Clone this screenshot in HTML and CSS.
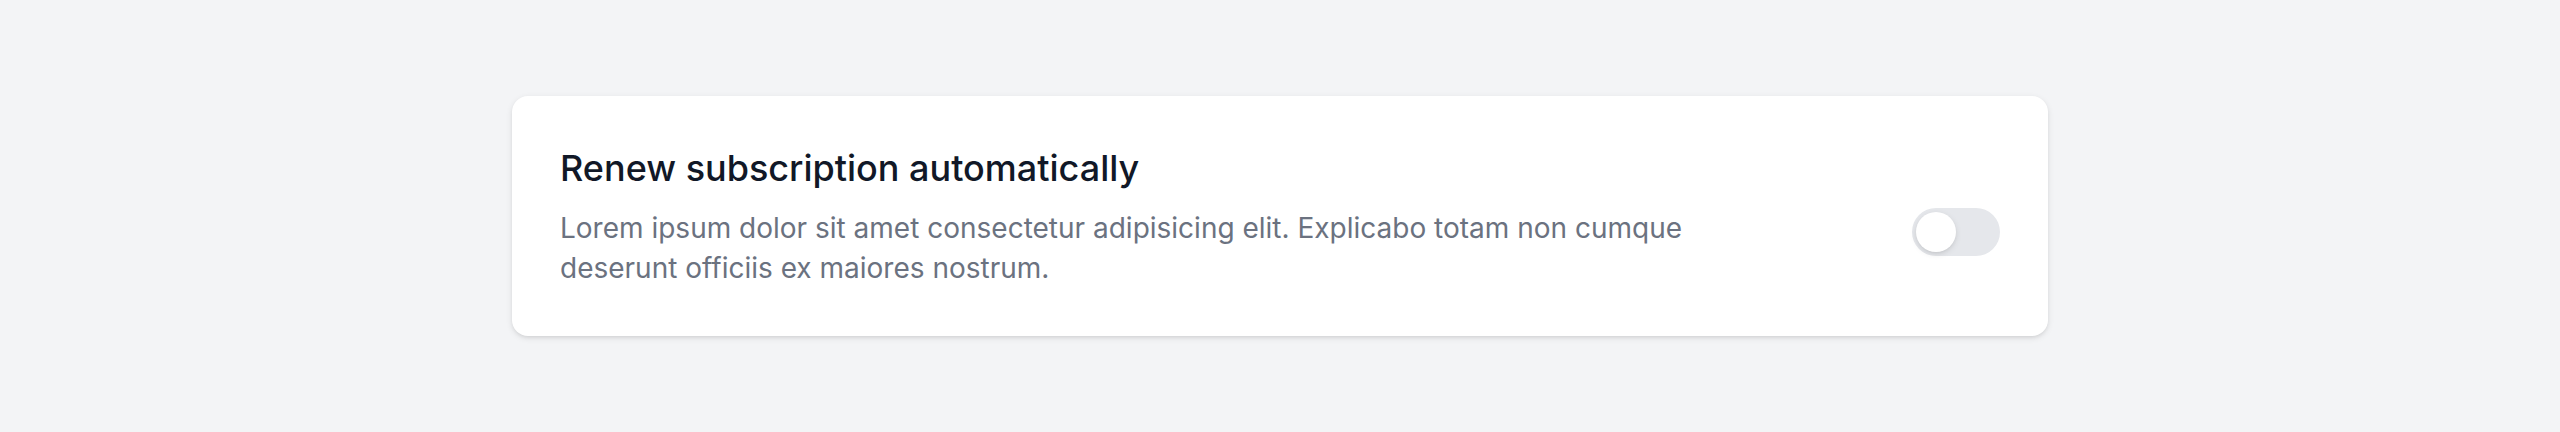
FILE: index.html
```html
<!DOCTYPE html>
<html lang="en">
<head>
<meta charset="utf-8">
<title>Renew subscription</title>
<link rel="stylesheet" href="styles.css">
</head>
<body>
<main class="page">
  <section class="card">
    <h3 class="title" id="renew-label">Renew subscription automatically</h3>
    <div class="row">
      <div class="desc">
        <p>Lorem ipsum dolor sit amet consectetur adipisicing elit. Explicabo totam non cumque deserunt officiis ex maiores nostrum.</p>
      </div>
      <div class="toggle-wrap">
        <button type="button" class="toggle" role="switch" aria-checked="false" aria-labelledby="renew-label">
          <span class="knob"></span>
        </button>
      </div>
    </div>
  </section>
</main>
</body>
</html>
```

FILE: styles.css
```css
* { box-sizing: border-box; }
html, body { margin: 0; padding: 0; }
body {
  background: #f3f4f6;
  font-family: Inter, "Noto Sans", "Liberation Sans", sans-serif;
  -webkit-font-smoothing: antialiased;
}
.page {
  padding: 96px 0;
}
.card {
  max-width: 1536px;
  margin: 0 auto;
  background: #ffffff;
  border-radius: 16px;
  box-shadow: 0 2px 6px 0 rgba(0,0,0,0.1), 0 2px 4px -2px rgba(0,0,0,0.1);
  padding: 48px;
}
.title {
  margin: 0;
  font-size: 36px;
  line-height: 48px;
  font-weight: 500;
  color: #111827;
}
.row {
  margin-top: 16px;
  display: flex;
  align-items: flex-start;
  justify-content: space-between;
}
.desc {
  max-width: 1152px;
  font-size: 28px;
  line-height: 40px;
  color: #6b7280;
}
.desc p { margin: 0; }
.toggle-wrap {
  margin-left: 48px;
  display: flex;
  flex-shrink: 0;
  align-items: center;
}
.toggle {
  position: relative;
  display: inline-flex;
  width: 88px;
  height: 48px;
  flex-shrink: 0;
  padding: 0;
  border: 4px solid transparent;
  border-radius: 9999px;
  background: #e5e7eb;
  cursor: pointer;
}
.knob {
  display: inline-block;
  width: 40px;
  height: 40px;
  border-radius: 9999px;
  background: #ffffff;
  box-shadow: 0 2px 6px 0 rgba(0,0,0,0.1), 0 2px 4px -2px rgba(0,0,0,0.1);
}
```
